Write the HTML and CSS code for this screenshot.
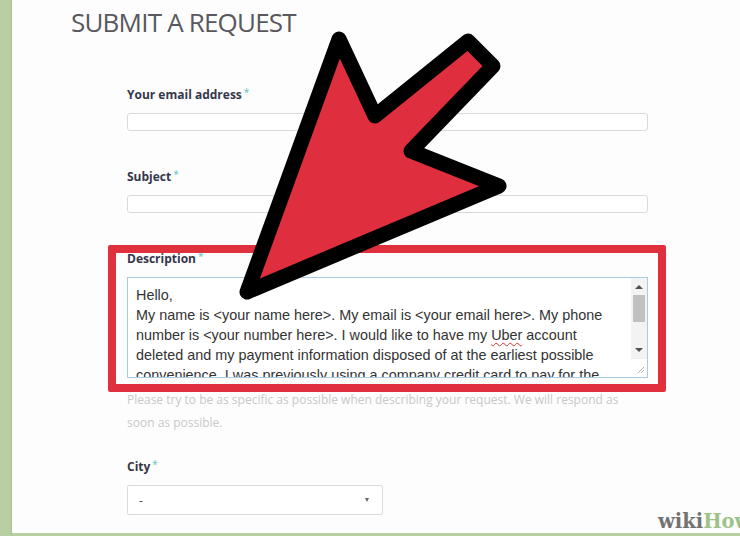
FILE: index.html
```html
<!DOCTYPE html>
<html lang="en">
<head>
<meta charset="utf-8">
<title>Submit a request</title>
<link rel="stylesheet" href="styles.css">
</head>
<body>
<div class="page">
  <div class="stripe"></div>
  <main class="main">
    <h1 class="title">SUBMIT A REQUEST</h1>
    <form class="form">
      <div class="field">
        <label class="label">Your email address<span class="req">*</span></label>
        <div class="input"></div>
      </div>
      <div class="field">
        <label class="label">Subject<span class="req">*</span></label>
        <div class="input"></div>
      </div>
      <div class="field">
        <label class="label">Description<span class="req">*</span></label>
        <div class="textarea">
          <div class="ta-text">Hello,<br>My name is &lt;your name here&gt;. My email is &lt;your email here&gt;. My phone<br>number is &lt;your number here&gt;. I would like to have my <span class="spell">Uber</span> account<br>deleted and my payment information disposed of at the earliest possible<br>convenience. I was previously using a company credit card to pay for the</div>
          <div class="scrollbar">
            <div class="sb-btn"><span class="tri-up"></span></div>
            <div class="sb-track"><div class="sb-thumb"></div></div>
            <div class="sb-btn"><span class="tri-down"></span></div>
            <div class="sb-corner">
              <svg width="8" height="8" viewBox="0 0 8 8"><path d="M1 7 L7 1 M4 7 L7 4" stroke="#b0b0b0" stroke-width="1"/></svg>
            </div>
          </div>
        </div>
        <p class="hint">Please try to be as specific as possible when describing your request. We will respond as<br>soon as possible.</p>
      </div>
      <div class="field">
        <label class="label">City<span class="req">*</span></label>
        <div class="select"><span class="sel-val">-</span><span class="caret"></span></div>
      </div>
    </form>
    <div class="highlight"></div>
    <svg class="arrow" width="740" height="536" viewBox="0 0 740 536">
      <polygon points="247,292 339,39 375,116 468,41 493,66 411,151 499,186" fill="#df2f3f" stroke="#000" stroke-width="15" stroke-linejoin="round"/>
    </svg>
    <div class="logo">wiki<span class="how">How</span></div>
  </main>
</div>
</body>
</html>
```
FILE: styles.css
```css
* { box-sizing: border-box; }
html, body {
  margin: 0;
  padding: 0;
  width: 740px;
  height: 536px;
  overflow: hidden;
  background: #fcfcfc;
}
.page {
  display: flex;
  width: 740px;
  height: 536px;
}
.stripe {
  width: 12px;
  flex: none;
  background: #b7cfa2;
  border-right: 1px solid #a9c293;
}
.main {
  position: relative;
  flex: 1;
  height: 536px;
  overflow: hidden;
  border-bottom: 3px solid #b7cfa2;
  background: #fdfdfd;
  padding-top: 6px;
}
.title {
  margin: 0 0 0 59px;
  font-family: "Open Sans", sans-serif;
  font-weight: 400;
  font-size: 26px;
  line-height: 32px;
  color: #58585e;
  letter-spacing: -0.8px;
}
.form {
  margin: 49px 0 0 115px;
  width: 521px;
}
.label {
  display: block;
  font-family: "Open Sans", sans-serif;
  font-weight: 700;
  font-size: 12px;
  line-height: 16px;
  height: 16px;
  color: #35364a;
  margin-bottom: 10px;
}
.req {
  color: #5fc0cb;
  font-weight: 400;
  font-size: 10px;
  line-height: 0;
  vertical-align: 3px;
  margin-left: 2px;
}
.input {
  height: 18px;
  border: 1px solid #d9d9d9;
  border-radius: 3px;
  background: #fff;
  margin-bottom: 38px;
}
.textarea {
  display: flex;
  height: 101px;
  border: 1px solid #a8cae2;
  background: #fff;
}
.ta-text {
  flex: 1;
  padding: 7px 0 0 8px;
  font-family: "Liberation Sans", Arial, sans-serif;
  font-size: 14.4px;
  line-height: 20px;
  color: #333;
  white-space: nowrap;
  overflow: hidden;
}
.spell {
  text-decoration: underline wavy #e03030;
  text-decoration-thickness: 1px;
  text-underline-offset: 2px;
}
.scrollbar {
  width: 16px;
  flex: none;
  display: flex;
  flex-direction: column;
  background: #f3f3f3;
}
.sb-btn {
  height: 17px;
  display: flex;
  align-items: center;
  justify-content: center;
  background: #f3f3f3;
}
.tri-up {
  width: 0; height: 0;
  border-left: 4px solid transparent;
  border-right: 4px solid transparent;
  border-bottom: 4px solid #505050;
}
.tri-down {
  width: 0; height: 0;
  border-left: 4px solid transparent;
  border-right: 4px solid transparent;
  border-top: 4px solid #505050;
}
.sb-track {
  flex: 1;
  padding: 0 2px;
}
.sb-thumb {
  height: 27px;
  background: #c1c1c1;
}
.sb-corner {
  height: 19px;
  background: #fff;
  border-top: 1px solid #eee;
  display: flex;
  align-items: flex-end;
  justify-content: flex-end;
  padding: 0 2px 3px 0;
}
.hint {
  margin: 10px 0 25px;
  font-family: "Open Sans", sans-serif;
  font-size: 12px;
  line-height: 23px;
  color: #c8c8c8;
  white-space: nowrap;
}
.select {
  width: 256px;
  height: 30px;
  border: 1px solid #dcdcdc;
  border-radius: 2px;
  background: #fff;
  display: flex;
  align-items: center;
  justify-content: space-between;
  padding: 0 13px 0 11px;
  font-family: "Open Sans", sans-serif;
  font-size: 12px;
  color: #444;
}
.caret {
  width: 0; height: 0;
  border-left: 2.5px solid transparent;
  border-right: 2.5px solid transparent;
  border-top: 4px solid #666;
}
.highlight {
  position: absolute;
  left: 96px;
  top: 245px;
  width: 558px;
  height: 147px;
  border: 8px solid #e0303e;
  border-radius: 2px;
}
.arrow {
  position: absolute;
  left: -12px;
  top: 0;
}
.logo {
  position: absolute;
  left: 646px;
  top: 510px;
  font-family: "DejaVu Serif", serif;
  font-weight: 700;
  font-size: 19.5px;
  line-height: 24px;
  color: #727272;
  white-space: nowrap;
}
.how {
  color: #9dc388;
}
```
